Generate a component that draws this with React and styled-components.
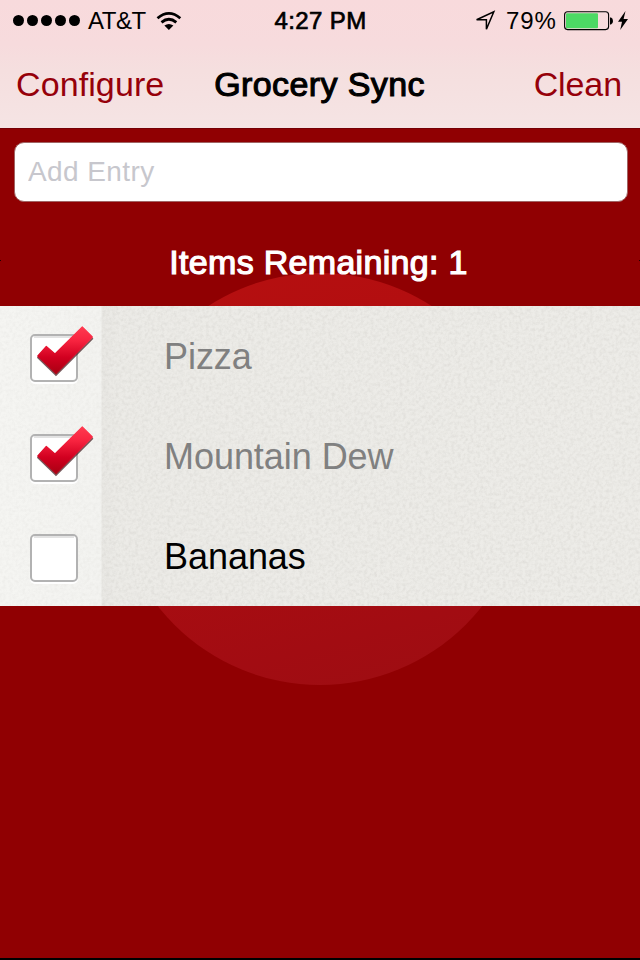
import React from "react";
import styled, { createGlobalStyle } from "styled-components";

const Global = createGlobalStyle`
  *, *::before, *::after { box-sizing: border-box; }
  html, body { margin: 0; padding: 0; }
  body { background: #900002; font-family: "Liberation Sans", Arial, sans-serif; }
`;

const Screen = styled.div`
  position: relative;
  width: 640px;
  height: 960px;
  display: flex;
  flex-direction: column;
  overflow: hidden;
  background: #900002;
  border-bottom: 2px solid #000;
`;

const Disc = styled.div`
  position: absolute;
  left: 114px;
  top: 273px;
  width: 412px;
  height: 412px;
  border-radius: 50%;
  background: linear-gradient(165deg, #b61010 0%, #b30e10 20%, #a20c12 82%, #9c0e12 100%);
`;

const Header = styled.header`
  position: relative;
  height: 128px;
  background: linear-gradient(to bottom, #f8dadc 0%, #f7dbdd 35%, #f5dfdf 55%, #f5e4e4 100%);
`;

const StatusBar = styled.div`
  display: grid;
  grid-template-columns: 1fr auto 1fr;
  align-items: center;
  height: 41px;
  padding: 0 11px 0 12px;
  font-size: 24px;
  line-height: 41px;
  color: #000;
`;

const StatusGroup = styled.div`
  display: flex;
  align-items: center;
  justify-content: ${(p) => (p.$end ? "flex-end" : "flex-start")};
`;

const Signal = styled.div`
  display: flex;
  gap: 3px;
  margin: 0 8px 0 1px;
`;

const Dot = styled.span`
  width: 11px;
  height: 11px;
  border-radius: 50%;
  background: #000;
`;

const Carrier = styled.span`
  width: 68px;
  letter-spacing: -0.5px;
`;

const Clock = styled.span`
  letter-spacing: 0.4px;
  -webkit-text-stroke: 0.7px #000;
`;

const Percent = styled.span`
  width: 58px;
  margin-left: 9px;
  letter-spacing: 0.9px;
`;

const NavBar = styled.nav`
  display: grid;
  grid-template-columns: 1fr auto 1fr;
  height: 87px;
  padding: 0 18px 0 16px;
  font-size: 34px;
  line-height: 87px;
`;

const NavButton = styled.a`
  color: #96000a;
  text-align: ${(p) => (p.$end ? "right" : "left")};
  letter-spacing: ${(p) => (p.$end ? "-0.1px" : "0.1px")};
`;

const Title = styled.h1`
  margin: 0;
  font-size: 34px;
  font-weight: 400;
  line-height: 87px;
  letter-spacing: 0.4px;
  text-indent: 1px;
  color: #000;
  -webkit-text-stroke: 1.1px #000;
`;

const EntryArea = styled.section`
  position: relative;
  height: 178px;
  padding: 14px 12px 0 14px;
  border-top: 1px solid #760006;
`;

const EntryInput = styled.input`
  display: block;
  width: 614px;
  height: 60px;
  margin-top: -1px;
  padding: 0 13px;
  border: 1px solid #a06464;
  border-radius: 10px;
  outline: none;
  background: #fff;
  font: 28px "Liberation Sans", Arial, sans-serif;
  letter-spacing: 0.4px;
  &::placeholder { color: #c7c7cd; opacity: 1; }
`;

const Remaining = styled.h2`
  margin: 40px 0 0 0;
  font-size: 34px;
  font-weight: 400;
  line-height: 40px;
  letter-spacing: 0.3px;
  text-align: center;
  text-indent: -5px;
  color: #fff;
  -webkit-text-stroke: 1.2px #fff;
`;

const EdgeMark = styled.i`
  position: absolute;
  top: 131px;
  ${(p) => p.$side}: 0;
  width: 1px;
  height: 1px;
  background: #200;
`;

const List = styled.ul`
  position: relative;
  margin: 0;
  padding: 0;
  list-style: none;
  background: linear-gradient(to right, #f5f5f2 0, #f3f3f0 101px, #e9e8e4 102px, #ecebe7 120px, #edece8 100%);
`;

const Grain = styled.svg`
  position: absolute;
  inset: 0;
  width: 640px;
  height: 300px;
`;

const Row = styled.li`
  position: relative;
  display: grid;
  grid-template-columns: 164px 1fr;
  grid-template-rows: 100px;
  align-items: center;
  height: 100px;
`;

const Label = styled.span`
  padding-top: 2px;
  font-size: 36px;
  line-height: 98px;
  letter-spacing: -0.05px;
  color: ${(p) => (p.$done ? "#808080" : "#000")};
`;

const CheckIcon = styled.svg`
  display: block;
  width: 70px;
  height: 70px;
  margin-left: 27px;
`;

function Checkbox({ checked }) {
  return (
    <CheckIcon viewBox="27 321 70 70">
      <defs>
        <linearGradient id="tick" gradientUnits="userSpaceOnUse" x1="0" y1="326" x2="0" y2="374">
          <stop offset="0" stopColor="#ff3b50" />
          <stop offset="0.3" stopColor="#f82440" />
          <stop offset="0.65" stopColor="#d20020" />
          <stop offset="1" stopColor="#a80012" />
        </linearGradient>
      </defs>
      <rect x="31" y="336" width="46" height="47" rx="4" fill="none" stroke="#fff" strokeWidth="2" />
      <rect x="31" y="335" width="46" height="46" rx="4" fill="#fff" stroke="#b2b2b2" strokeWidth="2" />
      <path d="M34 337H74" stroke="#e3e3e3" strokeWidth="2" />
      {checked && (
        <>
          <path d="M37.5 357L56 375L92.8 338.2" fill="none" stroke="#4a2226" strokeWidth="1.8" opacity="0.75" />
          <path
            d="M37.8 356L46.3 346.5L55 354L82.3 327L92.3 337L56 373.5Z"
            fill="url(#tick)"
            stroke="url(#tick)"
            strokeWidth="1.2"
            strokeLinejoin="round"
          />
        </>
      )}
    </CheckIcon>
  );
}

const items = [
  { name: "Pizza", done: true },
  { name: "Mountain Dew", done: true },
  { name: "Bananas", done: false },
];

export default function App() {
  return (
    <Screen>
      <Global />
      <Disc />
      <Header>
        <StatusBar>
          <StatusGroup>
            <Signal>{[0, 1, 2, 3, 4].map((n) => <Dot key={n} />)}</Signal>
            <Carrier>AT&amp;T</Carrier>
            <svg width="26" height="20" viewBox="156 10 26 20">
              <g fill="none" stroke="#000" strokeWidth="2.8">
                <path d="M157.5 17.2Q168.9 7.6 180.3 17.2" />
                <path d="M161.5 21.4Q168.9 15.2 176.3 21.4" />
              </g>
              <path d="M164.4 24.6Q168.9 21.2 173.4 24.6L168.9 29Z" />
            </svg>
          </StatusGroup>
          <Clock>4:27 PM</Clock>
          <StatusGroup $end>
            <svg width="22" height="22" viewBox="474 9 22 22">
              <path d="M475.6 18.7L492.8 10.8L485.4 28.2L485.4 18.7Z" fill="none" stroke="#000" strokeWidth="1.5" />
            </svg>
            <Percent>79%</Percent>
            <svg width="65" height="20" viewBox="564 10 65 20">
              <rect x="564.6" y="10.8" width="44" height="17.8" rx="3" fill="none" stroke="#000" strokeWidth="1.1" />
              <rect x="566" y="12.2" width="32" height="15" rx="1" fill="#4cd964" />
              <path d="M610 16.5H611Q613 17 613 20T611 23.5H610Z" />
              <path d="M625.5 10L618 20.8H622L620.2 29L628 18H623.6Z" />
            </svg>
          </StatusGroup>
        </StatusBar>
        <NavBar>
          <NavButton>Configure</NavButton>
          <Title>Grocery Sync</Title>
          <NavButton $end>Clean</NavButton>
        </NavBar>
      </Header>
      <EntryArea>
        <EdgeMark $side="left" />
        <EdgeMark $side="right" />
        <EntryInput placeholder="Add Entry" />
        <Remaining>Items Remaining: 1</Remaining>
      </EntryArea>
      <List>
        <Grain>
          <filter id="grain" x="0" y="0" width="100%" height="100%" colorInterpolationFilters="sRGB">
            <feTurbulence type="fractalNoise" baseFrequency="0.31" numOctaves="3" seed="9" />
            <feColorMatrix values="0 0 0 0 0.5  0 0 0 0 0.48  0 0 0 0 0.45  0.3 0.2 0 0 -0.2" />
          </filter>
          <rect width="102" height="300" filter="url(#grain)" opacity="0.3" />
          <rect x="102" width="538" height="300" filter="url(#grain)" opacity="0.55" />
        </Grain>
        {items.map((item) => (
          <Row key={item.name}>
            <Checkbox checked={item.done} />
            <Label $done={item.done}>{item.name}</Label>
          </Row>
        ))}
      </List>
    </Screen>
  );
}
